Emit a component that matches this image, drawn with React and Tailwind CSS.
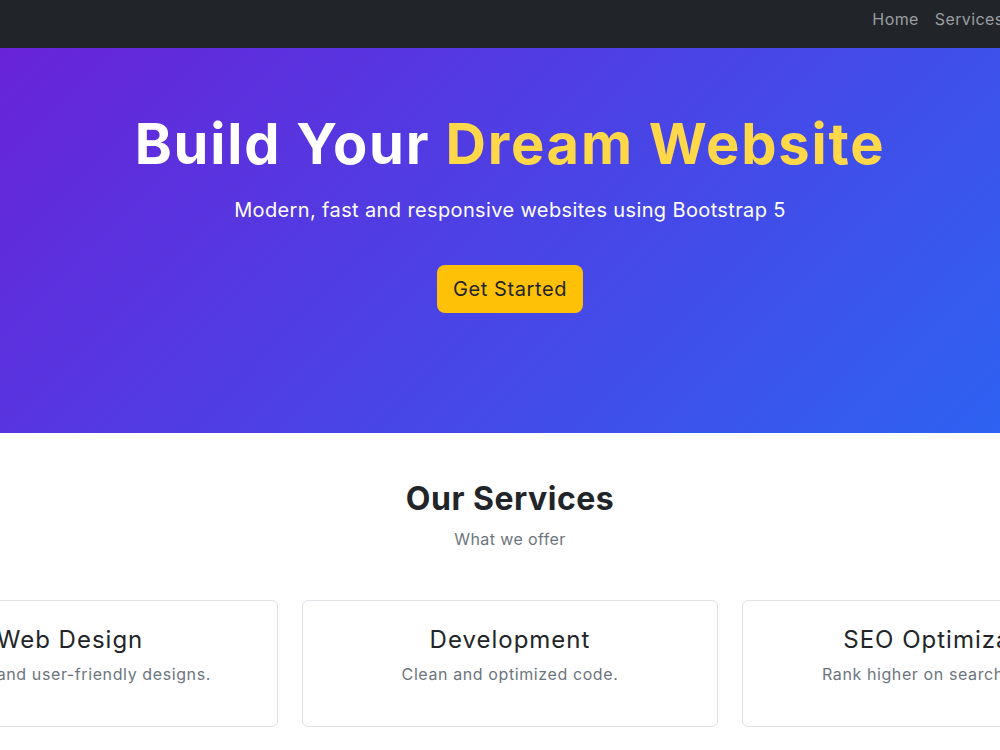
export default function App() {
  const services = [
    { title: 'Web Design', text: 'Modern and user-friendly designs.' },
    { title: 'Development', text: 'Clean and optimized code.' },
    { title: 'SEO Optimization', text: 'Rank higher on search engines.' },
  ]

  return (
    <div className="w-[1000px] overflow-hidden bg-white" style={{ fontFamily: 'Inter, "Noto Sans", sans-serif' }}>
      <div className="w-[1020px]">
        <nav className="h-[48px] bg-[#212529] flex justify-center">
          <div className="w-[1296px] shrink-0 flex items-start justify-between pt-[7px]">
            <span className="text-white text-xl font-bold">WebStudio</span>
            <ul className="flex pr-[5px] text-[16px] leading-[24px] tracking-[0.4px] text-[#9a9da1]">
              <li className="px-2">Home</li>
              <li className="px-2">Services</li>
              <li className="px-2">About</li>
              <li className="px-2">Contact</li>
            </ul>
          </div>
        </nav>

        <section className="h-[385px] bg-[linear-gradient(135deg,#6823d8,#2d63f2)] flex flex-col items-center pt-[63px] text-center">
          <h1 className="text-[56px] leading-[67px] font-bold tracking-[1.8px] text-white whitespace-nowrap">
            Build Your <span className="text-[#ffd84a]">Dream Website</span>
          </h1>
          <p className="mt-[17px] text-[20px] leading-[30px] tracking-[0.37px] text-white">
            Modern, fast and responsive websites using Bootstrap 5
          </p>
          <button className="mt-[40px] h-[48px] px-4 rounded-lg bg-[#ffc107] text-[20px] tracking-[0.6px] text-[#212529]">
            Get Started
          </button>
        </section>

        <section className="pt-[47px] pb-12 flex flex-col items-center text-center">
          <h2 className="text-[32px] leading-[38px] font-bold tracking-[0.5px] text-[#212529]">Our Services</h2>
          <p className="mt-[9px] text-[16px] leading-[24px] tracking-[0.4px] text-[#6c757d]">What we offer</p>
          <div className="w-full flex justify-center mt-[49px]">
            <div className="w-[1296px] shrink-0 grid grid-cols-3 gap-6">
              {services.map((s) => (
                <div key={s.title} className="border border-[#dee2e6] rounded-md p-6 text-center">
                  <h4 className="text-[24px] leading-[29px] tracking-[1px] text-[#212529] mb-2">{s.title}</h4>
                  <p className="text-[16px] leading-[24px] tracking-[0.6px] text-[#6c757d] mb-4">{s.text}</p>
                </div>
              ))}
            </div>
          </div>
        </section>
      </div>
    </div>
  )
}
